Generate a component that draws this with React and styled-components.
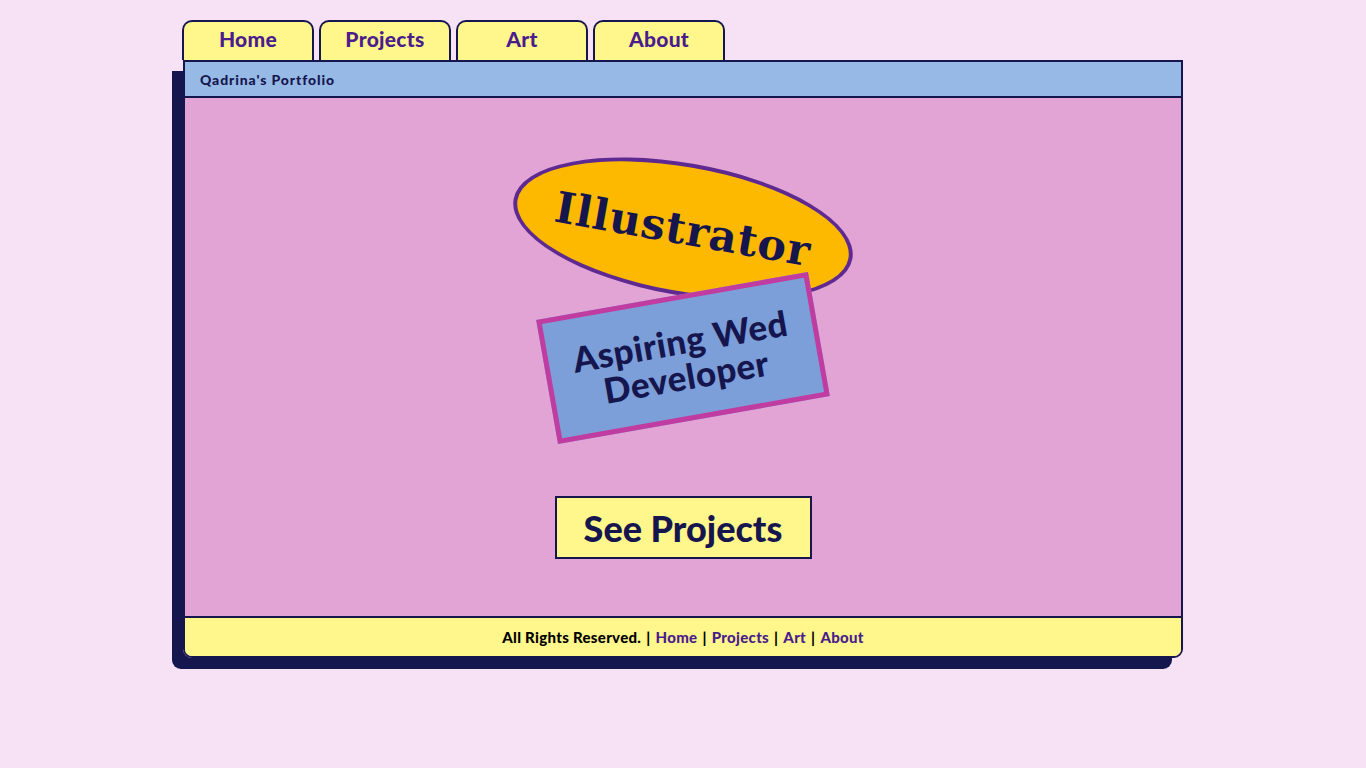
import React from 'react';
import styled, { createGlobalStyle } from 'styled-components';

const navy = '#16164f';
const purple = '#4b1d8c';
const yellow = '#fff78c';

const GlobalStyle = createGlobalStyle`
  body {
    margin: 0;
    background: #f7e2f5;
    font-family: Lato, 'Open Sans', sans-serif;
  }
`;

const Page = styled.div`
  width: 1000px;
  margin: 0 auto;
  padding: 20px 0 40px;
`;

const Tabs = styled.nav`
  display: flex;
  gap: 5px;
  margin-left: -1px;
`;

const Tab = styled.a`
  width: 132px;
  height: 40px;
  box-sizing: border-box;
  display: flex;
  align-items: center;
  justify-content: center;
  padding-bottom: 5px;
  background: ${yellow};
  border: 2px solid ${navy};
  border-bottom: none;
  border-radius: 10px 10px 0 0;
  color: ${purple};
  font-size: 21px;
  font-weight: 900;
  letter-spacing: 0.3px;
  text-decoration: none;
`;

const Window = styled.div`
  border: 2px solid ${navy};
  border-radius: 0 0 9px 9px;
  box-shadow: -11px 11px 0 0 ${navy};
`;

const TitleBar = styled.header`
  height: 34px;
  display: flex;
  align-items: center;
  padding-left: 15px;
  background: #97b9e6;
  border-bottom: 2px solid ${navy};
  color: ${navy};
  font-size: 14px;
  font-weight: 900;
  letter-spacing: 0.9px;
`;

const Content = styled.main`
  height: 518px;
  box-sizing: border-box;
  padding-top: 65px;
  display: flex;
  flex-direction: column;
  align-items: center;
  background: #e1a4d5;
`;

const Oval = styled.div`
  width: 344px;
  height: 132px;
  box-sizing: border-box;
  display: flex;
  align-items: center;
  justify-content: center;
  background: #fdb900;
  border: 4px solid #5e2a91;
  border-radius: 50%;
  transform: rotate(10deg);
  color: ${navy};
  font-family: 'DejaVu Serif', serif;
  font-size: 43px;
  font-weight: 700;
  letter-spacing: 0.8px;
`;

const Card = styled.div`
  width: 276px;
  height: 126px;
  box-sizing: border-box;
  display: flex;
  align-items: center;
  justify-content: center;
  text-align: center;
  background: #7d9fd9;
  border: 5px solid #c03ca0;
  transform: rotate(-10deg);
  color: ${navy};
  font-size: 35px;
  font-weight: 900;
  line-height: 36px;
  letter-spacing: 0.5px;
`;

const CtaButton = styled.button`
  margin-top: 75px;
  width: 257px;
  height: 63px;
  background: ${yellow};
  border: 2px solid ${navy};
  color: ${navy};
  font-family: Lato, sans-serif;
  font-size: 36px;
  font-weight: 900;
  cursor: pointer;
`;

const Footer = styled.footer`
  height: 38px;
  display: flex;
  align-items: center;
  justify-content: center;
  gap: 5px;
  background: ${yellow};
  border-top: 2px solid ${navy};
  border-radius: 0 0 7px 7px;
  color: #000;
  font-size: 15px;
  font-weight: 900;
  letter-spacing: 0.3px;
`;

const FootLink = styled.a`
  color: ${purple};
  text-decoration: none;
`;

const links = ['Home', 'Projects', 'Art', 'About'];

const App = () => (
  <Page>
    <GlobalStyle />
    <Tabs>
      {links.map((l) => (
        <Tab key={l} href="#">{l}</Tab>
      ))}
    </Tabs>
    <Window>
      <TitleBar>Qadrina's Portfolio</TitleBar>
      <Content>
        <Oval>Illustrator</Oval>
        <Card>
          Aspiring Wed
          <br />
          Developer
        </Card>
        <CtaButton>See Projects</CtaButton>
      </Content>
      <Footer>
        <span>All Rights Reserved.</span>
        {links.map((l) => (
          <React.Fragment key={l}>
            <span>|</span>
            <FootLink href="#">{l}</FootLink>
          </React.Fragment>
        ))}
      </Footer>
    </Window>
  </Page>
);

export default App;
